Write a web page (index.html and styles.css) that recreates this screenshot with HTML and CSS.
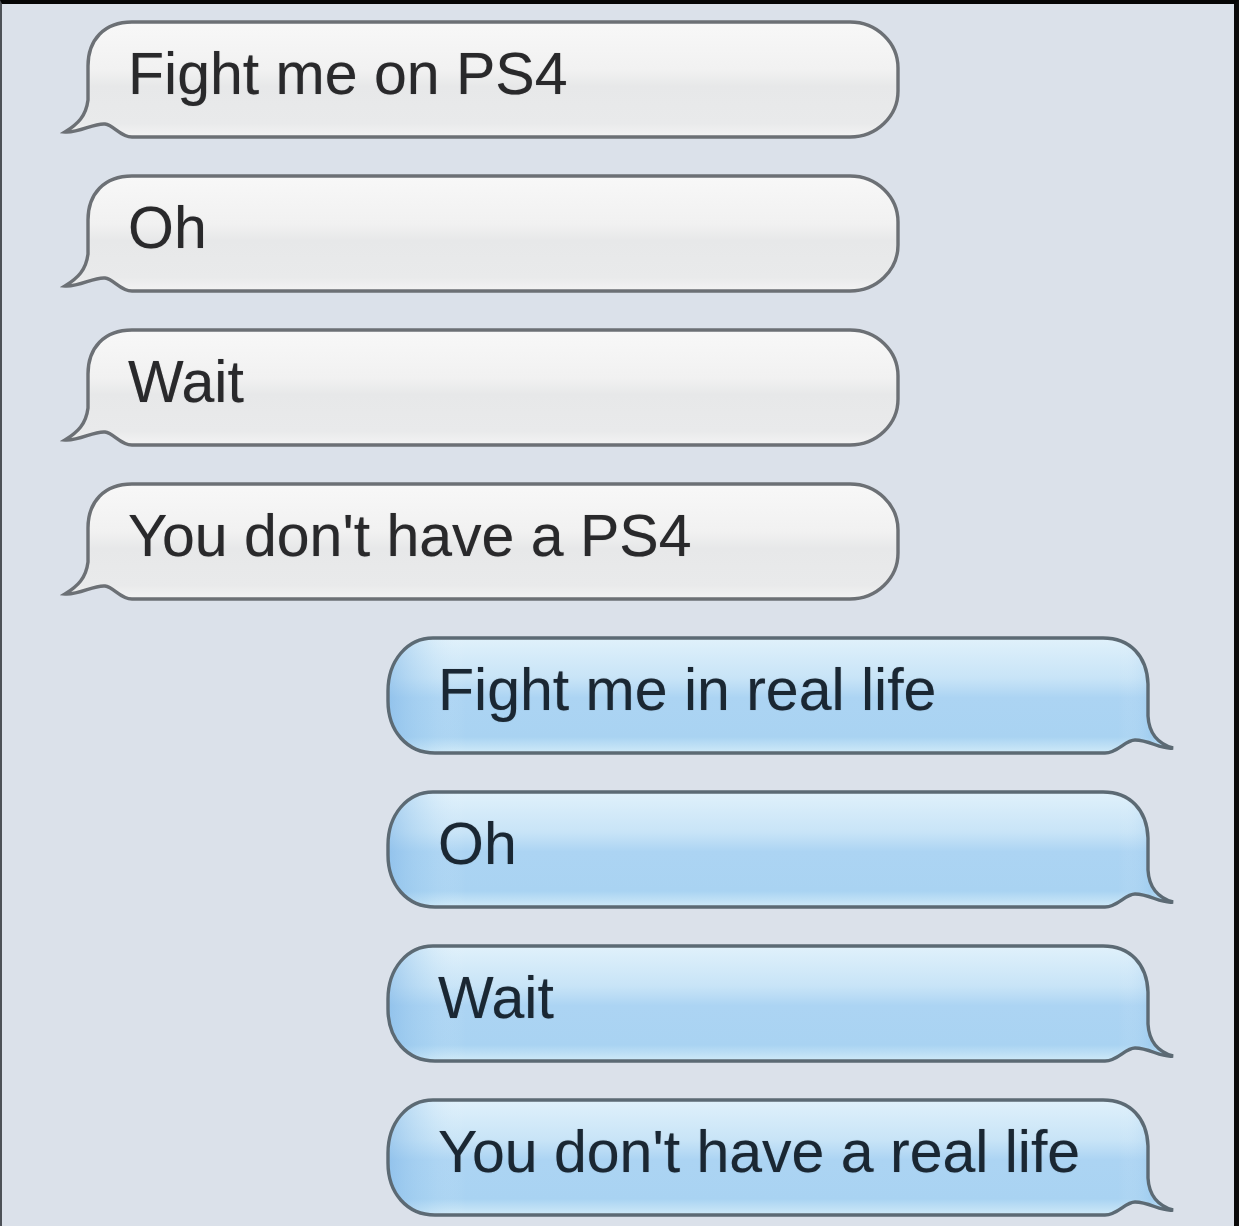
FILE: index.html
```html
<!DOCTYPE html>
<html lang="en">
<head>
<meta charset="utf-8">
<title>Fight me</title>
<link rel="stylesheet" href="styles.css">
</head>
<body>
<svg class="defs" width="0" height="0" aria-hidden="true">
  <defs>
    <linearGradient id="gFill" x1="0" y1="0" x2="0" y2="1">
      <stop offset="0" stop-color="#f8f8f8"/>
      <stop offset="0.42" stop-color="#f1f1f1"/>
      <stop offset="0.56" stop-color="#e7e8e9"/>
      <stop offset="0.88" stop-color="#e9eaeb"/>
      <stop offset="1" stop-color="#f3f3f3"/>
    </linearGradient>
    <linearGradient id="bFill" x1="0" y1="0" x2="0" y2="1">
      <stop offset="0" stop-color="#e0f1fb"/>
      <stop offset="0.35" stop-color="#c8e4f7"/>
      <stop offset="0.52" stop-color="#acd4f3"/>
      <stop offset="0.86" stop-color="#a9d3f2"/>
      <stop offset="1" stop-color="#cfeaf8"/>
    </linearGradient>
    <linearGradient id="bEdge" x1="0" y1="0" x2="1" y2="0">
      <stop offset="0" stop-color="#7db4e6" stop-opacity="0.55"/>
      <stop offset="0.05" stop-color="#9ccaee" stop-opacity="0.2"/>
      <stop offset="0.1" stop-color="#ffffff" stop-opacity="0"/>
      <stop offset="0.93" stop-color="#ffffff" stop-opacity="0"/>
      <stop offset="0.97" stop-color="#8fc1ea" stop-opacity="0.25"/>
      <stop offset="1" stop-color="#8fc1ea" stop-opacity="0"/>
    </linearGradient>
    <path id="gShape" d="M 72 2 H 790 A 48 46 0 0 1 838 48 V 71 A 48 46 0 0 1 790 117 H 72 C 60 117, 54 105, 45 104 C 33 103, 20 113, 5 112 C 18 104, 26 96, 28 80 V 46 C 28 20, 44 2, 72 2 Z"/>
    <path id="bShape" d="M 48 2 H 718 C 745 2, 762 20, 763 48 V 80 C 764 98, 774 108, 788 112 C 776 114, 765 104, 750 104 C 740 104, 733 117, 720 117 H 50 C 22 117, 3 95, 3 65 V 55 C 3 25, 22 2, 48 2 Z"/>
  </defs>
</svg>

<main class="screen">
  <div class="thread">
    <div class="msg in">
      <svg class="shape" viewBox="0 0 840 120" width="840" height="120"><use href="#gShape" fill="url(#gFill)" stroke="#6c7075" stroke-width="3.4"/></svg>
      <span class="txt">Fight me on PS4</span>
    </div>
    <div class="msg in">
      <svg class="shape" viewBox="0 0 840 120" width="840" height="120"><use href="#gShape" fill="url(#gFill)" stroke="#6c7075" stroke-width="3.4"/></svg>
      <span class="txt">Oh</span>
    </div>
    <div class="msg in">
      <svg class="shape" viewBox="0 0 840 120" width="840" height="120"><use href="#gShape" fill="url(#gFill)" stroke="#6c7075" stroke-width="3.4"/></svg>
      <span class="txt">Wait</span>
    </div>
    <div class="msg in">
      <svg class="shape" viewBox="0 0 840 120" width="840" height="120"><use href="#gShape" fill="url(#gFill)" stroke="#6c7075" stroke-width="3.4"/></svg>
      <span class="txt">You don't have a PS4</span>
    </div>

    <div class="msg out">
      <svg class="shape" viewBox="0 0 795 120" width="795" height="120"><use href="#bShape" fill="url(#bFill)"/><use href="#bShape" fill="url(#bEdge)" stroke="#5c6a74" stroke-width="3.4"/></svg>
      <span class="txt">Fight me in real life</span>
    </div>
    <div class="msg out">
      <svg class="shape" viewBox="0 0 795 120" width="795" height="120"><use href="#bShape" fill="url(#bFill)"/><use href="#bShape" fill="url(#bEdge)" stroke="#5c6a74" stroke-width="3.4"/></svg>
      <span class="txt">Oh</span>
    </div>
    <div class="msg out">
      <svg class="shape" viewBox="0 0 795 120" width="795" height="120"><use href="#bShape" fill="url(#bFill)"/><use href="#bShape" fill="url(#bEdge)" stroke="#5c6a74" stroke-width="3.4"/></svg>
      <span class="txt">Wait</span>
    </div>
    <div class="msg out">
      <svg class="shape" viewBox="0 0 795 120" width="795" height="120"><use href="#bShape" fill="url(#bFill)"/><use href="#bShape" fill="url(#bEdge)" stroke="#5c6a74" stroke-width="3.4"/></svg>
      <span class="txt">You don't have a real life</span>
    </div>
  </div>
</main>
</body>
</html>
```

FILE: styles.css
```css
html, body {
  margin: 0;
  padding: 0;
  background: #000;
}

.defs {
  display: block;
  width: 0;
  height: 0;
  overflow: hidden;
}

.screen {
  box-sizing: border-box;
  width: 1239px;
  height: 1226px;
  background: #dbe1ea;
  border-top: 4px solid #050505;
  border-right: 5px solid #0a0a0a;
  border-left: 2px solid #4d5157;
  padding-top: 16px;
  overflow: hidden;
  font-family: "Liberation Sans", Arial, Helvetica, sans-serif;
}

.thread {
  display: flex;
  flex-direction: column;
  gap: 34px;
}

.msg {
  position: relative;
  height: 120px;
  box-sizing: border-box;
  padding-top: 25px;
}

.msg.in {
  width: 840px;
  margin-left: 58px;
  padding-left: 68px;
}

.msg.out {
  width: 795px;
  margin-left: 383px;
  padding-left: 53px;
}

.shape {
  position: absolute;
  left: 0;
  top: 0;
  display: block;
}

.txt {
  position: relative;
  display: block;
  font-size: 59px;
  line-height: 59px;
  white-space: nowrap;
  text-shadow: 0 0 1px rgba(0, 0, 0, 0.35);
}

.msg.in .txt {
  color: #29292b;
}

.msg.out .txt {
  color: #1a2733;
}
```
